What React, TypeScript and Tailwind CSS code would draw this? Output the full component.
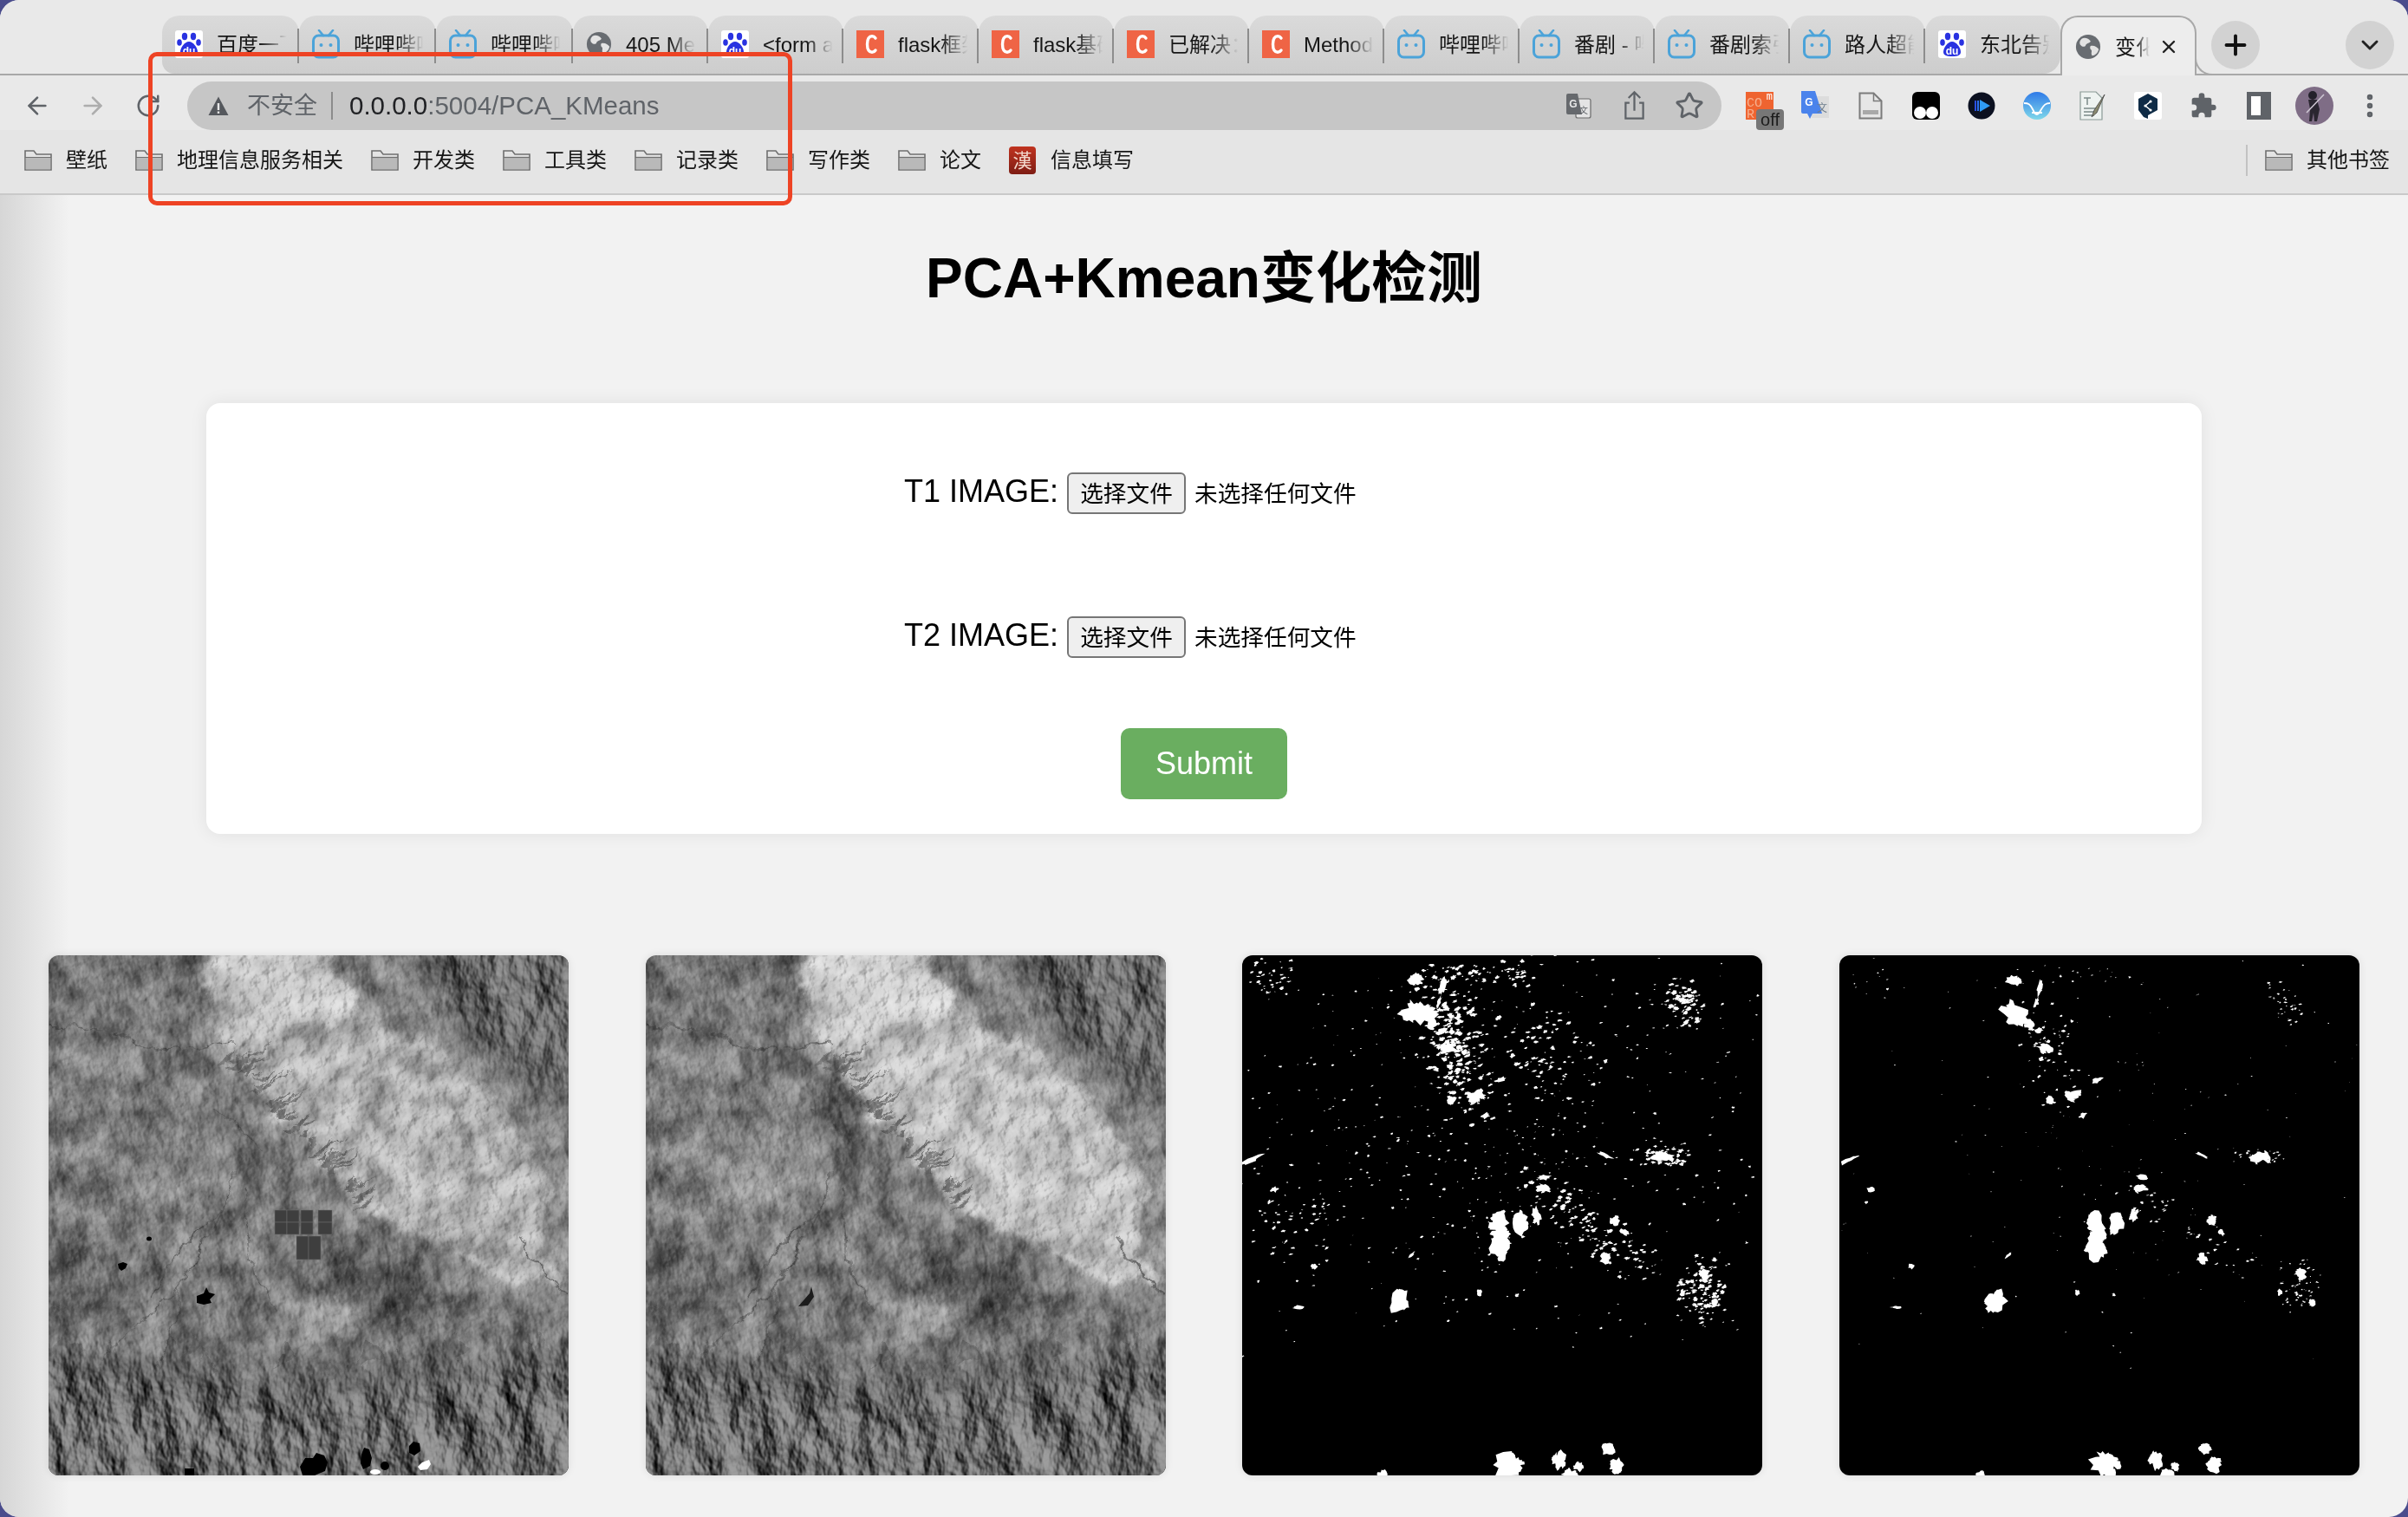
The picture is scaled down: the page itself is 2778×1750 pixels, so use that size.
import { ArrowLeft, ArrowRight, ChevronDown, EllipsisVertical, Plus, RotateCw, Star, X } from "lucide-react";

// seeded random so the pictures stay the same on each run
const makeRandom = (seed: number) => () => {
  seed = (seed + 0x6d2b79f5) | 0;
  let t = Math.imul(seed ^ (seed >>> 15), 1 | seed);
  t = (t + Math.imul(t ^ (t >>> 7), 61 | t)) ^ t;
  return ((t ^ (t >>> 14)) >>> 0) / 4294967296;
};

const blobPath = (cx: number, cy: number, rx: number, ry: number, rot: number, rand: () => number) => {
  const n = 14;
  const a = (rot * Math.PI) / 180;
  const pts: string[] = [];
  for (let i = 0; i < n; i++) {
    const t = (i / n) * Math.PI * 2;
    const k = 0.55 + rand() * 0.7;
    const x = Math.cos(t) * rx * k;
    const y = Math.sin(t) * ry * k;
    pts.push(`${(cx + x * Math.cos(a) - y * Math.sin(a)).toFixed(1)} ${(cy + x * Math.sin(a) + y * Math.cos(a)).toFixed(1)}`);
  }
  return `M${pts.join("L")}Z`;
};

type Blob = [number, number, number, number, number?];

const bigBlobs: Blob[] = [
  [200, 28, 9, 6], [231, 37, 3, 10, 15], [227, 54, 2, 7, 20], [204, 68, 20, 11, 15], [219, 80, 5, 6], [230, 87, 6, 3, -20],
  [237, 107, 9, 5, 10], [233, 120, 3, 3], [298, 144, 7, 3, -20], [270, 162, 10, 6, -20], [242, 167, 5, 5], [281, 185, 5, 3, -30],
  [340, 300, 4, 9, -10], [349, 256, 7, 3], [347, 269, 8, 4], [419, 350, 6, 6], [430, 306, 5, 6], [441, 320, 5, 3, 35],
  [486, 233, 13, 5, -10], [419, 231, 9, 2, 25], [11, 236, 13, 2.5, -25], [37, 270, 5, 3], [31, 285, 2, 2], [83, 359, 3.5, 3.5],
  [181, 400, 11, 13, 25], [65, 406, 6, 2], [195, 346, 5, 1.5, -45], [545, 401, 4, 4], [533, 368, 6, 6], [508, 389, 3, 4],
  [274, 389, 3, 4], [317, 392, 2, 2], [306, 588, 17, 12], [366, 582, 7, 11], [388, 590, 5, 5], [378, 599, 8, 6], [422, 570, 7, 6],
  [433, 588, 8, 9], [162, 599, 5, 5],
  // the bright solar field blocks
  [297, 309, 10, 13], [298, 322, 10, 8], [320, 309, 8, 13], [296, 338, 11, 14],
];

// x, y, spread x, spread y, count, angle, speck size
type Cluster = [number, number, number, number, number, number, number];

const denseClusters: Cluster[] = [
  [245, 105, 28, 68, 190, -15, 4], [510, 55, 16, 24, 90, -30, 3.4], [275, 22, 55, 12, 60, 0, 3], [30, 28, 26, 22, 40, 0, 2.8],
  [300, 200, 285, 200, 640, 0, 2], [400, 310, 80, 22, 120, 35, 3.2], [530, 385, 24, 32, 120, 0, 3.2], [485, 232, 26, 10, 60, 0, 3],
  [350, 110, 60, 50, 70, 0, 3.4], [60, 300, 40, 50, 40, 0, 2.8],
];

const sparseClusters: Cluster[] = [
  [245, 105, 28, 68, 70, -15, 2.4], [510, 55, 14, 22, 36, -30, 2.2], [275, 22, 55, 10, 20, 0, 1.6], [30, 28, 26, 22, 12, 0, 1.6],
  [300, 220, 285, 210, 170, 0, 1.1], [400, 310, 75, 18, 45, 35, 2.2], [530, 385, 22, 30, 60, 0, 2], [485, 232, 24, 9, 22, 0, 1.8],
];

const ChangeMap = ({ seed, scale, clusters }: { seed: number; scale: number; clusters: Cluster[] }) => {
  const rand = makeRandom(seed);
  const paths: string[] = [];
  bigBlobs.forEach(([x, y, rx, ry, rot]) => {
    paths.push(blobPath(x, y, rx * scale, ry * scale, rot ?? 0, rand));
    // larger patches get a few lobes so their outline is not a plain oval
    if (Math.min(rx, ry) >= 4) {
      for (let i = 0; i < 4; i++) {
        const t = rand() * Math.PI * 2;
        paths.push(blobPath(x + Math.cos(t) * rx * 0.7, y + Math.sin(t) * ry * 0.7, rx * 0.5, ry * 0.5, rand() * 60, rand));
      }
    }
  });
  clusters.forEach(([cx, cy, sx, sy, n, angle, size]) => {
    const a = (angle * Math.PI) / 180;
    for (let i = 0; i < n; i++) {
      const dx = (rand() + rand() - 1) * sx * 1.4;
      const dy = (rand() + rand() - 1) * sy * 1.4;
      const r = size * (0.3 + rand() * 0.8);
      paths.push(
        blobPath(cx + dx * Math.cos(a) - dy * Math.sin(a), cy + dx * Math.sin(a) + dy * Math.cos(a), r, r * (0.3 + rand() * 0.45), -30 + rand() * 35, rand),
      );
    }
  });
  return (
    <svg viewBox="0 0 600 600" className="block h-[600px] w-[600px]">
      <rect width="600" height="600" fill="#000" />
      <path d={paths.join("")} fill="#fff" />
    </svg>
  );
};

const brightZone = "175,29 195,-10 325,-10 355,70 430,95 505,150 550,215 575,242 565,315 600,385 489,360 428,318 367,295 326,245 265,185 203,111";
const rivers = [
  "M212 250C216 280 196 300 176 340S140 400 100 430S60 480 20 520",
  "M225 270C232 320 230 370 262 410",
  "M200 295C170 315 135 350 120 395",
  "M245 225C232 205 210 190 190 180",
  "M0 80C50 85 70 85 100 100S190 105 215 100",
  "M598 395C575 370 560 350 545 325",
  "M340 470C345 510 370 540 360 600",
  "M150 385C150 420 140 450 100 520",
];

// the satellite images: tone map + lit noise, so the relief reads like hillshade
const Terrain = ({ id, seed, first }: { id: string; seed: number; first?: boolean }) => {
  const rand = makeRandom(seed * 97);
  const spikes: string[] = [];
  for (let i = 0; i < 60; i++) {
    const t = rand();
    const x = 203 + t * 160 + (rand() - 0.5) * 14;
    const y = 111 + t * 170 + (rand() - 0.5) * 14;
    const len = 8 + rand() * rand() * 46;
    const w = 1.5 + rand() * 4;
    spikes.push(`M${x - w} ${y + w}L${x + len * 0.85} ${y - len * (0.3 + rand() * 0.4)}L${x + w} ${y + w + 1}Z`);
  }
  const folds: string[] = [];
  for (let i = 0; i < 80; i++) {
    const x = rand() * 620;
    const y = 425 + rand() * 160;
    const h = 30 + rand() * 70;
    const lean = -26 + rand() * 20;
    const w = 8 + rand() * 20;
    folds.push(`M${x} ${y}L${x + w} ${y + h * 0.5}L${x + lean} ${y + h}L${x - w * 0.3} ${y + h * 0.45}Z`);
  }
  return (
    <svg viewBox="0 0 600 600" className="block h-[600px] w-[600px]">
      <defs>
        {/* wobbles the tone edges so they do not look like polygons */}
        <filter id={`${id}-soft`} x="-10%" y="-10%" width="120%" height="120%" colorInterpolationFilters="sRGB">
          <feGaussianBlur in="SourceGraphic" stdDeviation="5" result="b" />
          <feTurbulence type="fractalNoise" baseFrequency="0.03" numOctaves="5" seed={seed} />
          <feColorMatrix type="matrix" values="1 0 0 0 0 0 1 0 0 0 0 0 1 0 0 0 0 0 0 1" result="n" />
          <feDisplacementMap in="b" in2="n" scale="40" xChannelSelector="R" yChannelSelector="G" />
        </filter>
        <filter id={`${id}-wide`} x="-10%" y="-10%" width="120%" height="120%">
          <feGaussianBlur stdDeviation="22" />
        </filter>
        <filter id={`${id}-wobble`} x="-5%" y="-5%" width="110%" height="110%" colorInterpolationFilters="sRGB">
          <feTurbulence type="fractalNoise" baseFrequency="0.05" numOctaves="4" seed={seed + 2} />
          <feColorMatrix type="matrix" values="1 0 0 0 0 0 1 0 0 0 0 0 1 0 0 0 0 0 0 1" result="n" />
          <feDisplacementMap in="SourceGraphic" in2="n" scale="16" xChannelSelector="R" yChannelSelector="G" />
        </filter>
        <filter id={`${id}-ridge`} x="0" y="0" width="100%" height="100%" colorInterpolationFilters="sRGB">
          <feTurbulence type="fractalNoise" baseFrequency="0.02 0.012" numOctaves="5" seed={seed} />
          <feDiffuseLighting surfaceScale="15" diffuseConstant="0.62" lightingColor="#fff">
            <feDistantLight azimuth="150" elevation="45" />
          </feDiffuseLighting>
        </filter>
        <filter id={`${id}-fine`} x="0" y="0" width="100%" height="100%" colorInterpolationFilters="sRGB">
          <feTurbulence type="fractalNoise" baseFrequency="0.07" numOctaves="4" seed={seed + 5} />
          <feDiffuseLighting surfaceScale="1.8" diffuseConstant="0.72" lightingColor="#fff">
            <feDistantLight azimuth="200" elevation="45" />
          </feDiffuseLighting>
        </filter>
        {/* low frequency patches, as fields and slopes */}
        <filter id={`${id}-mottle`} x="0" y="0" width="100%" height="100%" colorInterpolationFilters="sRGB">
          <feTurbulence type="fractalNoise" baseFrequency="0.028" numOctaves="4" seed={seed + 9} />
          <feColorMatrix type="matrix" values="2 0 0 0 -0.5 2 0 0 0 -0.5 2 0 0 0 -0.5 0 0 0 0 1" />
        </filter>
        <mask id={`${id}-hills`}>
          <rect width="600" height="600" fill="#4a4a4a" />
          <g filter={`url(#${id}-wide)`}>
            <polygon points="-40,450 120,470 220,490 340,490 430,480 640,450 640,640 -40,640" fill="#fff" />
            <polygon points="420,-40 640,-40 640,150 540,130 470,70" fill="#ddd" />
          </g>
          <polygon points={brightZone} fill="#000" filter={`url(#${id}-soft)`} />
        </mask>
      </defs>
      <rect width="600" height="600" fill="#808080" />
      <g filter={`url(#${id}-wide)`}>
        <polygon points={brightZone} fill="#a8a8a8" />
        <polygon points="-40,470 120,490 220,500 640,470 640,640 -40,640" fill="#484848" />
        <polygon points="400,-40 640,-40 640,130 540,150 470,70" fill="#606060" />
        <polygon points="340,320 420,340 480,375 470,420 380,430 320,380" fill="#484848" />
        <polygon points="-40,300 50,320 70,380 20,420 -40,420" fill="#505050" />
        <polygon points="70,210 170,190 190,280 120,310 50,280" fill={first ? "#909090" : "#aaaaaa"} />
        <polygon points="130,-20 200,-20 205,50 170,60" fill="#505050" />
      </g>
      <g filter={`url(#${id}-soft)`}>
        <polygon points={brightZone} fill={first ? "#b4b4b4" : "#c4c4c4"} />
        <polygon points="190,-10 320,-10 350,70 260,90" fill={first ? "#cdcdcd" : "#d6d6d6"} />
        <polygon points="275,405 340,395 350,445 285,445" fill="#a6a6a6" />
        <polygon points="575,250 620,230 620,370 585,345" fill="#a8a8a8" />
        {!first && <polygon points="205,130 265,190 245,235 195,175" fill="#4a4a4a" />}
      </g>
      <rect width="600" height="600" filter={`url(#${id}-mottle)`} className="mix-blend-soft-light" opacity={0.8} />
      <g filter={`url(#${id}-wobble)`}>
        <path d={spikes.join("")} fill="#575757" opacity={0.7} />
        <path d={folds.join("")} fill="#1e1e1e" opacity={0.34} />
        {rivers.map((d) => (
          <path key={d} d={d} fill="none" stroke="#3d3d3d" strokeWidth={first ? 1.6 : 2.6} opacity={0.6} />
        ))}
      </g>
      <rect width="600" height="600" filter={`url(#${id}-fine)`} className="mix-blend-hard-light" opacity={0.7} />
      <g mask={`url(#${id}-hills)`}>
        <rect width="600" height="600" filter={`url(#${id}-ridge)`} className="mix-blend-hard-light" />
      </g>
      {first ? (
        <>
          <g fill="#3e3e3e" stroke="#6a6a6a" strokeWidth={0.6}>
            <rect x="261" y="294" width="14" height="14" />
            <rect x="261" y="308" width="14" height="14" />
            <rect x="275" y="294" width="14" height="14" />
            <rect x="275" y="308" width="14" height="14" />
            <rect x="291" y="294" width="14" height="14" />
            <rect x="291" y="308" width="14" height="14" />
            <rect x="311" y="294" width="16" height="14" />
            <rect x="311" y="308" width="16" height="14" />
            <rect x="286" y="324" width="14" height="27" />
            <rect x="300" y="324" width="14" height="27" />
          </g>
          <g fill="#000">
            <path d="M171 393l8-3 3-7 3 6 7 2-6 6 2 4-9 2-8-2z" />
            <path d="M80 356l6-2 5 2-2 5-5 3-3-3z" />
            <ellipse cx="116" cy="327" rx="3" ry="2.5" />
            <path d="M290 590l6-10 9 0 4-6 9 3 4 8-3 10-12 5h-14z" />
            <path d="M361 576l3-8 6 2 3 10-2 9-8 4-3-7z" />
            <ellipse cx="388" cy="589" rx="5" ry="5" />
            <path d="M416 566l5-5 7 2 1 9-7 5-6-3z" />
            <rect x="157" y="592" width="11" height="8" />
          </g>
          <g fill="#fff">
            <path d="M426 590l5-5 8-3 2 5-4 6-8 1z" />
            <ellipse cx="377" cy="596" rx="6" ry="3" />
          </g>
        </>
      ) : (
        <path d="M176 405l13-15 2-8 3 12-7 10z" fill="#1c1c1c" />
      )}
    </svg>
  );
};

const Paw = () => (
  <svg viewBox="0 0 32 32" className="h-8 w-8 shrink-0">
    <rect width="32" height="32" rx="3" fill="#fff" />
    <g fill="#2932e1">
      <ellipse cx="11" cy="7" rx="3.2" ry="4.2" />
      <ellipse cx="21" cy="7" rx="3.2" ry="4.2" />
      <ellipse cx="5" cy="14" rx="2.8" ry="3.8" />
      <ellipse cx="27" cy="14" rx="2.8" ry="3.8" />
      <path d="M16 13c5 0 10 7 10 12 0 4-4 5-10 5S6 29 6 25c0-5 5-12 10-12z" />
    </g>
    <text x="16" y="28" textAnchor="middle" fontSize="12" fontWeight="700" fill="#fff">du</text>
  </svg>
);

const Bili = () => (
  <svg viewBox="0 0 32 34" className="h-[34px] w-8 shrink-0">
    <path d="M8 1l5 6M24 1l-5 6" stroke="#4ba3d9" strokeWidth="2.6" strokeLinecap="round" />
    <rect x="1.5" y="7" width="29" height="25" rx="6" fill="none" stroke="#4ba3d9" strokeWidth="3" />
    <circle cx="10.5" cy="18" r="2" fill="#4ba3d9" />
    <circle cx="21.5" cy="18" r="2" fill="#4ba3d9" />
  </svg>
);

const Globe = () => (
  <svg viewBox="0 0 32 32" className="h-[30px] w-[30px] shrink-0">
    <circle cx="16" cy="16" r="15" fill="#686c71" />
    <path d="M8 6c4-2 9 0 11 3-1 3-5 2-6 5s-5 2-7-1c-1-3 0-5 2-7zM19 15c4-1 8 1 10 4-1 5-5 8-8 8-2-3 0-5-1-7-2-1-2-4-1-5z" fill="#e3e3e3" />
  </svg>
);

const Csdn = () => (
  <svg viewBox="0 0 32 32" className="h-8 w-8 shrink-0">
    <rect width="32" height="32" fill="#ef6445" />
    <path d="M22 9c-2-3-6-3-8 0s-2 11 0 14 6 3 8 0" fill="none" stroke="#fff" strokeWidth="3.4" strokeLinecap="round" />
  </svg>
);

const tabs = [
  { icon: <Paw />, title: "百度一下，你就知道" },
  { icon: <Bili />, title: "哔哩哔哩 (゜-゜)" },
  { icon: <Bili />, title: "哔哩哔哩 (゜-゜)" },
  { icon: <Globe />, title: "405 Method Not" },
  { icon: <Paw />, title: "<form action" },
  { icon: <Csdn />, title: "flask框架上传" },
  { icon: <Csdn />, title: "flask基础之" },
  { icon: <Csdn />, title: "已解决：上传" },
  { icon: <Csdn />, title: "Method Not" },
  { icon: <Bili />, title: "哔哩哔哩 (゜-゜)" },
  { icon: <Bili />, title: "番剧 - 哔哩哔哩" },
  { icon: <Bili />, title: "番剧索引" },
  { icon: <Bili />, title: "路人超能100" },
  { icon: <Paw />, title: "东北告别天团" },
];

const TabStrip = () => (
  <div className="relative flex h-[87px] items-start border-b-2 border-[#a8a8a8] bg-[#e9e9e9] pl-[187px] pt-[18px]">
    {tabs.map((tab, i) => (
      <div
        key={i}
        className={`relative flex h-[67px] items-center gap-[16px] rounded-t-[20px] bg-gradient-to-b from-[#dadada] to-[#cdcdcd] pb-[2px] pl-[15px] ${i < 3 ? "w-[158px]" : "w-[156px]"} ${i === 0 ? "rounded-bl-[14px]" : ""} ${i === tabs.length - 1 ? "rounded-br-[20px]" : ""}`}
      >
        {tab.icon}
        <span className="w-[84px] overflow-hidden whitespace-nowrap pt-[3px] text-[24px] leading-[32px] text-[#161616] [mask-image:linear-gradient(to_right,black_60%,transparent_96%)]">
          {tab.title}
        </span>
        {i < tabs.length - 1 && <span className="absolute right-0 top-[15px] h-[40px] w-[2px] bg-[#8d8d8d]" />}
      </div>
    ))}
    <div className="relative z-10 -mb-[2px] flex h-[69px] w-[157px] items-center rounded-t-[20px] border-2 border-b-0 border-[#a8a8a8] bg-[#ededed] pl-[15px]">
      <Globe />
      <span className="ml-[16px] w-[40px] overflow-hidden whitespace-nowrap pt-[3px] text-[24px] text-[#161616] [mask-image:linear-gradient(to_right,black_60%,transparent_100%)]">
        变化检测
      </span>
      <X className="ml-[10px] h-[24px] w-[24px] text-[#222]" strokeWidth={2.4} />
      <span className="absolute -right-[20px] bottom-0 h-[22px] w-[20px] rounded-bl-[20px] border-b-2 border-l-2 border-[#a8a8a8] bg-[#e9e9e9]" />
    </div>
    <button className="ml-[17px] mt-[6px] flex h-[56px] w-[56px] items-center justify-center rounded-full bg-[#d2d2d2]">
      <Plus className="h-[36px] w-[36px] text-[#111]" strokeWidth={2.6} />
    </button>
    <button className="ml-auto mr-[16px] mt-[6px] flex h-[56px] w-[56px] items-center justify-center rounded-full bg-[#d2d2d2]">
      <ChevronDown className="h-[32px] w-[32px] text-[#222]" strokeWidth={2.2} />
    </button>
  </div>
);

const Slot = ({ children }: { children: React.ReactNode }) => (
  <div className="flex h-[56px] w-16 shrink-0 items-center justify-center">{children}</div>
);

const TranslateIcon = () => (
  <svg viewBox="0 0 30 30" className="h-[30px] w-[30px]">
    <rect x="12" y="7" width="17" height="22" rx="2" fill="#e4e4e4" stroke="#6b6b6b" strokeWidth="1.2" />
    <path d="M3 1h11l5 24H3a2 2 0 0 1-2-2V3a2 2 0 0 1 2-2z" fill="#66696d" />
    <text x="9" y="17" textAnchor="middle" fontSize="12" fontWeight="700" fill="#e8e8e8">G</text>
    <text x="21" y="24" textAnchor="middle" fontSize="10" fill="#5f6368">文</text>
  </svg>
);

const Extensions = () => (
  <div className="ml-[12px] flex">
    <Slot>
      <div className="relative h-[32px] w-[32px] bg-[#ef6430] font-['Liberation_Mono',monospace] text-[15px] leading-[14px] text-[#f6b08f]">
        <span className="absolute left-[1px] top-[7px]">CO</span>
        <span className="absolute left-[1px] top-[20px]">R</span>
        <span className="absolute right-[1px] top-0 text-[12px] leading-[12px] text-white">m</span>
        <span className="absolute left-[12px] top-[20px] flex h-[24px] w-[32px] items-center justify-center rounded-[4px] bg-[#777] font-['Liberation_Sans',sans-serif] text-[20px] text-[#1c1c1c]">
          off
        </span>
      </div>
    </Slot>
    <Slot>
      <svg viewBox="0 0 32 34" className="h-[34px] w-8">
        <rect x="12" y="6" width="20" height="25" fill="#dcdcdc" />
        <path d="M0 0h16l8 26H13l-3 6-3-6H2a2 2 0 0 1-2-2z" fill="#4a83ec" />
        <text x="9" y="17" textAnchor="middle" fontSize="12" fontWeight="700" fill="#fff">G</text>
        <text x="24" y="24" textAnchor="middle" fontSize="12" fill="#6d7d8c">文</text>
      </svg>
    </Slot>
    <Slot>
      <svg viewBox="0 0 28 32" className="h-8 w-7">
        <path d="M1.5 1.5h16l9 9v20h-25z" fill="#e6e6e6" stroke="#7b7b7b" strokeWidth="2" />
        <path d="M17.500 1.500v9h9" fill="none" stroke="#7b7b7b" strokeWidth="1.500" />
        <rect x="5" y="21" width="18" height="5" fill="#a9a9a9" />
      </svg>
    </Slot>
    <Slot>
      <svg viewBox="0 0 32 32" className="h-8 w-8">
        <rect width="32" height="32" rx="6" fill="#000" />
        <circle cx="9" cy="24" r="7" fill="#fff" />
        <circle cx="23" cy="24" r="7" fill="#fff" />
      </svg>
    </Slot>
    <Slot>
      <svg viewBox="0 0 32 32" className="h-8 w-8">
        <circle cx="16" cy="16" r="15.500" fill="#0b1020" />
        <rect x="8" y="10" width="2" height="12" fill="#2a4ee0" />
        <rect x="11" y="10" width="2" height="12" fill="#2a6ff0" />
        <path d="M14 9l12 7-12 7z" fill="#2f9bf5" />
      </svg>
    </Slot>
    <Slot>
      <svg viewBox="0 0 32 32" className="h-8 w-8">
        <defs>
          <linearGradient id="wave-bg" x1="0" y1="0" x2="0" y2="1">
            <stop offset="0" stopColor="#2f7ae8" />
            <stop offset="1" stopColor="#7fd8ea" />
          </linearGradient>
        </defs>
        <circle cx="16" cy="16" r="16" fill="url(#wave-bg)" />
        <path d="M1 13c5 0 7 1 10 7s3 6 5 6 2-1 5-6 5-7 10-7M10 24h12" fill="none" stroke="#fff" strokeWidth="1.800" />
      </svg>
    </Slot>
    <Slot>
      <svg viewBox="0 0 32 34" className="h-[34px] w-8">
        <path d="M2 1h18l7 7v25H2z" fill="#eef3f1" stroke="#8a9a96" strokeWidth="1.200" />
        <path d="M6 8h8M10 8v8M6 20h14M6 24h14M6 28h12" stroke="#7b8a88" strokeWidth="1.500" />
        <path d="M30 4L18 22l-3 8 6-5z" fill="#8b8b70" stroke="#444" strokeWidth="0.800" />
      </svg>
    </Slot>
    <Slot>
      <svg viewBox="0 0 32 32" className="h-8 w-8">
        <rect width="32" height="32" rx="3" fill="#fff" />
        <path d="M16 2l11 6v13l-11 6v4l-5-2-6-8V8z" fill="#0f2b46" />
        <path d="M19 11l-6 5 6 5" fill="none" stroke="#fff" strokeWidth="1.500" />
        <circle cx="19" cy="11" r="1.600" fill="#fff" />
        <circle cx="13" cy="16" r="1.600" fill="#fff" />
        <circle cx="19" cy="21" r="1.600" fill="#fff" />
      </svg>
    </Slot>
    <Slot>
      <svg viewBox="0 0 24 24" className="h-8 w-8" fill="#5f6368">
        <path d="M20.500 11H19V7a2 2 0 0 0-2-2h-4V3.500a2.500 2.500 0 0 0-5 0V5H4a2 2 0 0 0-2 2v3.800h1.500a2.700 2.700 0 0 1 0 5.400H2V20a2 2 0 0 0 2 2h3.800v-1.500a2.700 2.700 0 0 1 5.400 0V22H17a2 2 0 0 0 2-2v-4h1.500a2.500 2.500 0 0 0 0-5z" />
      </svg>
    </Slot>
    <Slot>
      <div className="flex h-[32px] w-[28px] border-[5px] border-[#5f6368] bg-white">
        <span className="ml-auto h-full w-[7px] bg-[#5f6368]" />
      </div>
    </Slot>
    <Slot>
      <svg viewBox="0 0 44 44" className="h-[44px] w-[44px]">
        <circle cx="22" cy="22" r="22" fill="#7f6d86" />
        <circle cx="20" cy="10" r="5" fill="#23202a" />
        <path d="M15 15h10l3 11-3 14h-3l-1-10-2 10h-3l1-14z" fill="#2a2630" />
        <path d="M33 9L13 30" stroke="#cfc8d4" strokeWidth="1.500" />
      </svg>
    </Slot>
    <Slot>
      <EllipsisVertical className="h-[34px] w-[34px] text-[#5f6368]" strokeWidth={2.6} />
    </Slot>
  </div>
);

const Toolbar = () => (
  <div className="flex h-[63px] items-end bg-[#e9e9e9] pl-[11px]">
    <Slot>
      <ArrowLeft className="h-[32px] w-[32px] text-[#5f6368]" strokeWidth={2} />
    </Slot>
    <Slot>
      <ArrowRight className="h-[32px] w-[32px] text-[#adadad]" strokeWidth={2} />
    </Slot>
    <Slot>
      <RotateCw className="h-[30px] w-[30px] text-[#5f6368]" strokeWidth={2} />
    </Slot>
    <div className="ml-[13px] flex h-[56px] w-[1770px] shrink-0 items-center rounded-full bg-[#c6c6c6] pl-[24px] pr-[5px]">
      <svg viewBox="0 0 24 24" className="h-[24px] w-[24px] shrink-0">
        <path d="M12 1.500L23.500 23H.5z" fill="#55585d" />
        <rect x="10.800" y="9" width="2.400" height="8" fill="#e8e8e8" />
        <rect x="10.800" y="18.500" width="2.400" height="2.400" fill="#e8e8e8" />
      </svg>
      <span className="ml-[21px] text-[27px] text-[#5f6368]">不安全</span>
      <span className="ml-[16px] h-[32px] w-[2px] bg-[#8b8b8b]" />
      <span className="ml-[19px] text-[29.5px] text-[#5f6368]">
        <span className="text-[#202124]">0.0.0.0</span>:5004/PCA_KMeans
      </span>
      <div className="ml-auto flex">
        <Slot>
          <TranslateIcon />
        </Slot>
        <Slot>
          <svg viewBox="0 0 24 32" className="h-[36px] w-[27px]" fill="none" stroke="#5f6368" strokeWidth="2">
            <path d="M12 21V2M6 8l6-6 6 6M7 13H3v16h18V13h-4" />
          </svg>
        </Slot>
        <Slot>
          <Star className="h-[34px] w-[34px] text-[#5f6368]" strokeWidth={2} />
        </Slot>
      </div>
    </div>
    <Extensions />
  </div>
);

const Folder = () => (
  <svg viewBox="0 0 32 24" className="h-[24px] w-[32px] shrink-0">
    <path d="M1 23V1h10l3 4h17v18z" fill="#e4e4e4" stroke="#6f6f6f" strokeWidth="1.600" />
    <path d="M1.800 9h28.400v13.200H1.800z" fill="#b9b9b9" />
    <path d="M1 8.500h30" stroke="#6f6f6f" strokeWidth="1.200" />
  </svg>
);

const Seal = () => (
  <svg viewBox="0 0 31 32" className="h-[32px] w-[31px] shrink-0">
    <defs>
      <linearGradient id="seal-bg" x1="0" y1="0" x2="0" y2="1">
        <stop offset="0" stopColor="#c0331f" />
        <stop offset="1" stopColor="#7e1d14" />
      </linearGradient>
    </defs>
    <rect width="31" height="32" rx="4" fill="url(#seal-bg)" />
    <text x="15.500" y="24" textAnchor="middle" fontSize="22" fill="#f3d9cd">漢</text>
  </svg>
);

const bookmarks = ["壁纸", "地理信息服务相关", "开发类", "工具类", "记录类", "写作类", "论文"];

const Bookmarks = () => (
  <div className="flex h-[75px] items-center border-b-2 border-[#c9c9c9] bg-[#e5e5e5] pb-[3px] pl-[28px] pr-[21px] text-[24px] text-[#161616]">
    {bookmarks.map((name) => (
      <div key={name} className="mr-[32px] flex items-center gap-[16px]">
        <Folder />
        <span className="whitespace-nowrap">{name}</span>
      </div>
    ))}
    <div className="flex items-center gap-[17px]">
      <Seal />
      <span className="whitespace-nowrap">信息填写</span>
    </div>
    <span className="ml-auto mr-[20px] h-[36px] w-[2px] bg-[#c2c2c2]" />
    <div className="flex items-center gap-[16px]">
      <Folder />
      <span className="whitespace-nowrap">其他书签</span>
    </div>
  </div>
);

const FileRow = ({ label, className }: { label: string; className?: string }) => (
  <div className={`flex w-[692px] items-center ${className ?? ""}`}>
    <label className="mb-[4px] text-[36px] leading-[42px] text-black">{label}</label>
    <button className="ml-[10px] h-[48px] w-[137px] rounded-[6px] border-2 border-[#767676] bg-[#efefef] pt-[2px] text-[26.67px] leading-[32px] text-black">
      选择文件
    </button>
    <span className="ml-[10px] pt-[2px] text-[26.67px] leading-[32px] text-black">未选择任何文件</span>
  </div>
);

export default function App() {
  return (
    <div className="relative h-[1750px] w-[2778px] overflow-hidden bg-[#4a4c8c] font-['Liberation_Sans','Noto_Sans_CJK_SC',sans-serif]">
      <div className="relative h-full overflow-hidden rounded-[22px] bg-[#f2f2f2]">
        <TabStrip />
        <Toolbar />
        <Bookmarks />

        {/* shadow along the left edge of the page */}
        <div className="pointer-events-none absolute bottom-0 left-0 top-[225px] w-[80px] bg-gradient-to-r from-[#d6d6d6] to-[#f2f2f2]" />

        <main className="relative pt-[60px]">
          <h1 className="text-center text-[64px] font-bold leading-[72px] text-black">PCA+Kmean变化检测</h1>

          <form className="mx-[238px] mt-[108px] flex h-[497px] flex-col items-center rounded-[16px] bg-white pt-[80px] shadow-[0_0_20px_rgba(0,0,0,0.08)]">
            <FileRow label="T1 IMAGE:" />
            <FileRow label="T2 IMAGE:" className="mt-[118px]" />
            <button className="mt-[81px] h-[82px] w-[192px] rounded-[10px] bg-[#6aae60] text-[36px] text-white">Submit</button>
          </form>

          <div className="mt-[140px] flex justify-between px-[56px]">
            <div className="overflow-hidden rounded-[12px] shadow-[0_0_10px_rgba(0,0,0,0.1)]">
              <Terrain id="t1" seed={11} first />
            </div>
            <div className="overflow-hidden rounded-[12px] shadow-[0_0_10px_rgba(0,0,0,0.1)]">
              <Terrain id="t2" seed={11} />
            </div>
            <div className="overflow-hidden rounded-[12px] shadow-[0_0_10px_rgba(0,0,0,0.1)]">
              <ChangeMap seed={3} scale={1.1} clusters={denseClusters} />
            </div>
            <div className="overflow-hidden rounded-[12px] shadow-[0_0_10px_rgba(0,0,0,0.1)]">
              <ChangeMap seed={8} scale={1} clusters={sparseClusters} />
            </div>
          </div>
        </main>

        {/* red annotation box drawn over the screenshot */}
        <div className="pointer-events-none absolute left-[171px] top-[60px] h-[177px] w-[743px] rounded-[10px] border-[5px] border-[#ee4324]" />
      </div>
    </div>
  );
}
